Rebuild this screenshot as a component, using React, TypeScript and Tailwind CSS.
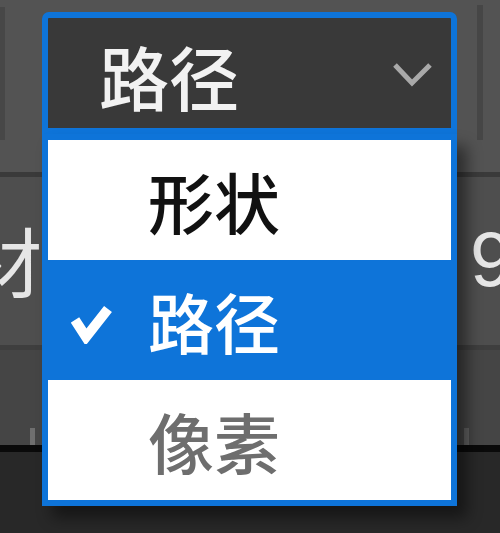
import React from "react";

const items = [
  { label: "形状", selected: false, tone: "text-[#111111]" },
  { label: "路径", selected: true, tone: "text-white" },
  { label: "像素", selected: false, tone: "text-[#6e6e6e]" },
];

function Chevron() {
  return (
    <svg width="41" height="25" viewBox="0 0 41 25" fill="none">
      <polyline points="3,3 20,21 38,3" stroke="#a9a9a9" strokeWidth="5" strokeLinejoin="miter" />
    </svg>
  );
}

function Check() {
  return (
    <svg width="42" height="42" viewBox="0 0 42 42" fill="none">
      <polyline points="4,18 15,35 37,7" stroke="#ffffff" strokeWidth="10" strokeLinejoin="miter" />
    </svg>
  );
}

export default function App() {
  return (
    <div className="w-[500px] h-[533px] overflow-hidden flex flex-col bg-[#535353] font-['Noto_Sans_CJK_SC',sans-serif]">
      {/* toolbar row with the open select */}
      <div className="h-[172px] flex items-start shrink-0">
        <div className="w-[5px] h-[133px] mt-[7px] bg-[#474747]" />
        <div className="relative ml-[37px] mt-[12px] w-[415px] z-10">
          <div className="h-[122px] border-[6px] border-[#0e74d9] rounded-t-[7px] bg-[#393939] flex items-center pl-[51px] pr-[18px]">
            <span className="text-[70px] font-medium leading-none text-[#f2f2f2] mt-[6px]">路径</span>
            <span className="ml-auto mt-[2px]">
              <Chevron />
            </span>
          </div>
          <div className="absolute left-0 top-full w-full border-[6px] border-[#0e74d9] bg-white shadow-[10px_12px_14px_rgba(0,0,0,0.45)]">
            {items.map((it) => (
              <div
                key={it.label}
                className={`h-[120px] flex items-center ${it.selected ? "bg-[#0e74d9]" : "bg-white"}`}
              >
                <div className="w-[100px] pl-[23px] flex items-center mt-[6px]">
                  {it.selected && <Check />}
                </div>
                <span className={`text-[66px] font-medium leading-none ${it.tone}`}>{it.label}</span>
              </div>
            ))}
          </div>
        </div>
        <div className="w-[6px] h-[135px] mt-[5px] ml-[20px] bg-[#464646]" />
      </div>

      <div className="h-[5px] bg-[#3a3a3a] shrink-0" />

      {/* panel row partly covered by the menu */}
      <div className="h-[168px] bg-[#4e4e4e] flex justify-between shrink-0">
        <div className="w-[42px] overflow-hidden flex justify-end pt-[44px]">
          <span className="text-[76px] leading-none text-[#e6e6e6] shrink-0">材</span>
        </div>
        <div className="w-[30px] overflow-hidden pt-[44px]">
          <span className="block text-[77px] leading-none text-[#e6e6e6] font-['Liberation_Sans',sans-serif] whitespace-nowrap">9</span>
        </div>
      </div>

      <div className="h-[5px] bg-[#3e3e3e] shrink-0" />

      <div className="h-[95px] bg-[#454545] flex justify-between items-end shrink-0">
        <div className="ml-[30px] w-[5px] h-[17px] bg-[#6f6f6f]" />
        <div className="mr-[31px] w-[5px] h-[17px] bg-[#5f5f5f]" />
      </div>

      <div className="h-[7px] bg-[#0a0a0a] shrink-0" />
      <div className="flex-1 bg-[#282828]" />
    </div>
  );
}
